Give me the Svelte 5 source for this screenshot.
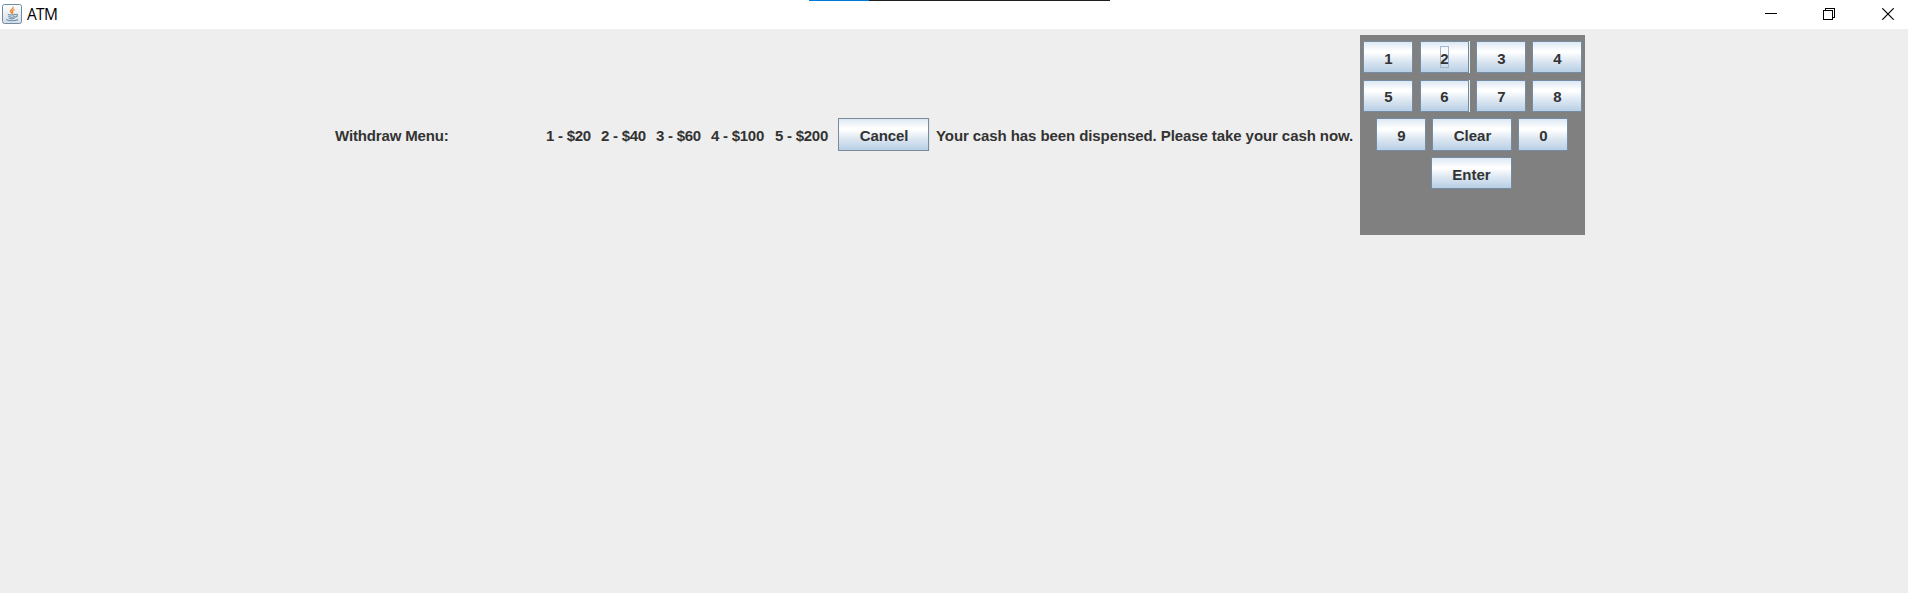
<script>
  const options = [
    { label: '1 - $20', width: 55 },
    { label: '2 - $40', width: 55 },
    { label: '3 - $60', width: 55 },
    { label: '4 - $100', width: 64 },
    { label: '5 - $200', width: 63 }
  ];
  let focused = $state('2');
  const rows = [
    ['1', '2', '3', '4'],
    ['5', '6', '7', '8'],
    ['9', 'Clear', '0'],
    ['Enter']
  ];
</script>

<div class="window">
  <header class="titlebar">
    <svg class="logo" width="20" height="20" viewBox="0 0 20 20">
      <defs>
        <linearGradient id="tile" x1="0" y1="0" x2="0" y2="1">
          <stop offset="0" stop-color="#ffffff" />
          <stop offset="1" stop-color="#d3dde6" />
        </linearGradient>
      </defs>
      <rect x="0.5" y="0.5" width="19" height="19" rx="2" fill="url(#tile)" stroke="#6d8ba3" />
      <g fill="none" stroke-linecap="round">
        <path d="M11.2 3.2c.6 1.800-3.400 2.500-2.800 4.100c.3.900 1.200 1.200 1.300 2M12.300 5.800c-2.200.8-2.700 1.500-1.700 2.400c.5.5.2 1-.3 1.400" stroke="#ee8c3c" stroke-width="1.300" />
        <path d="M6.200 10.500c1 .7 5.400.7 7 0M6.800 12.500c1.500.7 4.500.7 5.800 0M7.200 14.300c1.300.6 3.800.6 5 0M13.600 10.500c2.500-.6 2.300 2-.4 2.700M4.500 15.700c1.800 1.500 9.300 1.300 11 0" stroke="#6f8ea8" stroke-width="1.100" />
      </g>
    </svg>
    <span class="title">ATM</span>
    <div class="progress"></div>
    <div class="controls">
      <svg width="12" height="12" viewBox="0 0 12 12" shape-rendering="crispEdges"><path d="M0 5.500h12" /></svg>
      <svg width="12" height="12" viewBox="0 0 12 12" shape-rendering="crispEdges"><path d="M.5 2.500h9v9h-9zM2.500 2.500v-2h9v9h-2" /></svg>
      <svg class="close" width="12" height="12" viewBox="0 0 12 12"><path d="M.3.300l11.400 11.400M11.700.300L.3 11.700" /></svg>
    </div>
  </header>

  <main>
    <span class="heading">Withdraw Menu:</span>
    <div class="options">
      {#each options as option}
        <span style:width="{option.width}px">{option.label}</span>
      {/each}
    </div>
    <button class="cancel">Cancel</button>
    <span class="message">Your cash has been dispensed. Please take your cash now.</span>
    <section class="keypad">
      {#each rows as row, i}
        <div class="row row{i + 1}">
          {#each row as key}
            <button
              class:wide={key.length > 1}
              class:enter={key === 'Enter'}
              class:lit={key === '2' || key === '6'}
              onclick={() => (focused = key)}
            ><span class:focus={key === focused}>{key}</span></button>
          {/each}
        </div>
      {/each}
    </section>
  </main>
</div>

<style>
  :global(body) {
    margin: 0;
    overflow: hidden;
  }
  .window {
    height: 593px;
    background: #eeeeee;
    font: bold 15px/18px 'Liberation Sans', Arial, sans-serif;
    color: #333333;
    white-space: nowrap;
  }
  .titlebar {
    position: relative;
    display: flex;
    align-items: center;
    height: 29px;
    box-sizing: border-box;
    padding: 0 14px 1px 2px;
    background: #ffffff;
    color: #000000;
  }
  .logo {
    margin-top: -1px;
  }
  .title {
    margin-left: 5px;
    font: 15.5px/20px 'Open Sans', 'Noto Sans', sans-serif;
    letter-spacing: -0.7px;
  }
  .progress {
    position: absolute;
    top: 0;
    left: 809px;
    width: 301px;
    height: 1px;
    background: linear-gradient(to right, #0078d7 60px, #1f1f1f 60px);
  }
  .controls {
    display: flex;
    gap: 46px;
    margin-left: auto;
  }
  .controls svg {
    fill: none;
    stroke: #000000;
    stroke-width: 1;
  }
  .controls .close {
    margin-left: 1px;
    stroke-width: 1.2;
  }
  main {
    display: flex;
    align-items: flex-start;
    padding: 6px 0 0 335px;
  }
  .heading,
  .message {
    margin-top: 92px;
  }
  .heading {
    width: 211px;
    letter-spacing: -0.15px;
  }
  .options {
    display: flex;
    margin-top: 92px;
    letter-spacing: -0.25px;
  }
  button {
    box-sizing: border-box;
    width: 50px;
    height: 32px;
    padding: 2px 0 0 1px;
    border: 1px solid #7a8a99;
    border-radius: 0;
    background: linear-gradient(to bottom, #dde8f3 0%, #ffffff 30%, #ffffff 34%, #dbe6f1 65%, #b8cfe5 100%);
    color: inherit;
    font: inherit;
    text-align: center;
  }
  .cancel {
    width: 91px;
    height: 33px;
    margin-top: 83px;
    letter-spacing: -0.1px;
    box-shadow: 1px 0 0 #dce6f0;
  }
  .message {
    width: 423px;
    margin-left: 8px;
    box-sizing: border-box;
    letter-spacing: -0.085px;
    text-indent: -1px;
  }
  .keypad {
    display: flex;
    flex-direction: column;
    width: 225px;
    height: 200px;
    box-sizing: border-box;
    padding-top: 6px;
    background: #808080;
  }
  .row {
    display: flex;
    gap: 6px;
    height: 32px;
    margin: 0 0 7px 3px;
  }
  .row1 button:first-child,
  .row2 button:first-child {
    margin-right: 1px;
  }
  .row2 {
    margin-bottom: 6px;
  }
  .row3 {
    height: 33px;
    margin: 0 0 6px 16px;
  }
  .row3 button {
    height: 33px;
  }
  .row4 {
    margin-left: 71px;
  }
  .keypad button {
    border-color: #738ca3;
  }
  .keypad .row1 button {
    padding-top: 4px;
  }
  .keypad .row4 button {
    padding: 4px 0 0;
  }
  .keypad .wide {
    width: 80px;
  }
  .keypad .enter {
    width: 81px;
  }
  .keypad .lit {
    width: 49px;
    margin-right: 1px;
    padding-left: 0;
    box-shadow: 1px 0 0 #eef3f8;
  }
  .focus {
    display: block;
    width: 9px;
    height: 22px;
    margin: -5px auto 0;
    line-height: 26px;
    box-shadow: inset 0 0 0 1px #a3b8cc;
  }
</style>
